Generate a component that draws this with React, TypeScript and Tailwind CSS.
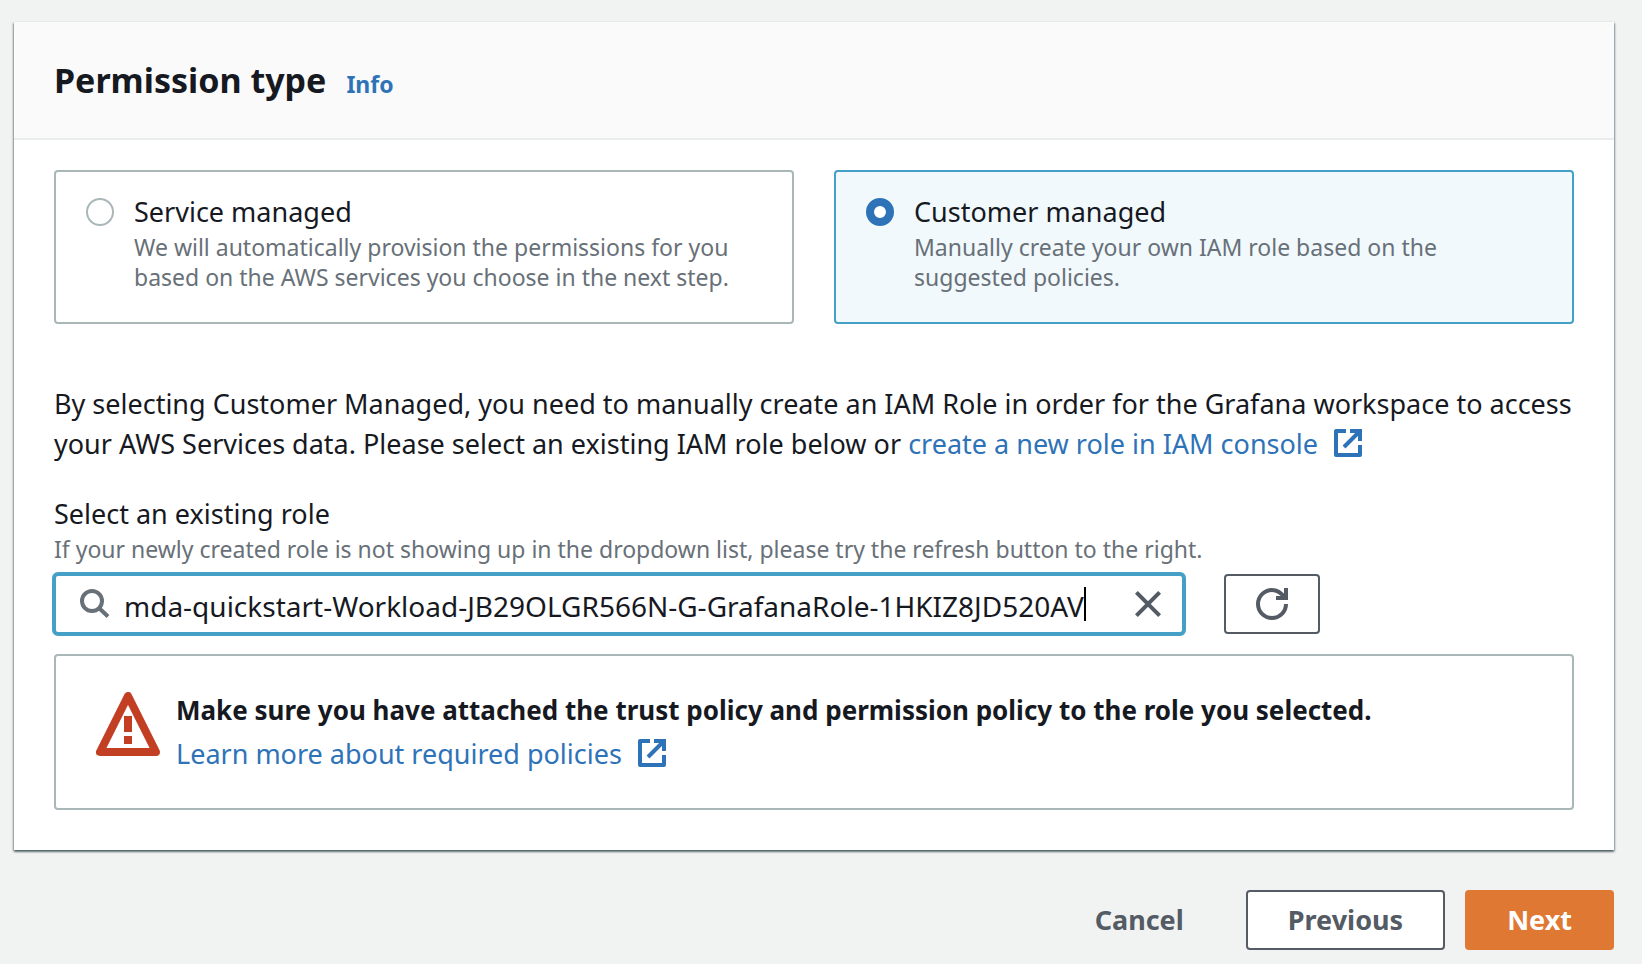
import { useState } from "react";

function ExternalIcon() {
  return (
    <svg className="ml-4 inline-block size-7 align-[-3px]" viewBox="0 0 28 28" fill="none" stroke="currentColor" strokeWidth="4" aria-hidden="true">
      <path d="M12 2H2V26H26V16" strokeLinejoin="round" />
      <path d="M16 2H26V12M26 2L10 18" />
    </svg>
  );
}

function SearchIcon() {
  return (
    <svg className="size-[30px] shrink-0 text-[#687078]" viewBox="0 0 30 30" fill="none" stroke="currentColor" strokeWidth="4" aria-hidden="true">
      <circle cx="12" cy="12" r="10" />
      <path d="M19 19L28 27.5" />
    </svg>
  );
}

function CloseIcon() {
  return (
    <svg className="size-[26px]" viewBox="0 0 26 26" fill="none" stroke="currentColor" strokeWidth="4" aria-hidden="true">
      <path d="M1.4 1.4L24.6 24.6M24.6 1.4L1.4 24.6" />
    </svg>
  );
}

function RefreshIcon() {
  return (
    <svg className="size-8" viewBox="0 0 32 32" fill="none" stroke="currentColor" strokeWidth="4" aria-hidden="true">
      <path d="M30 16A14 14 0 1 1 16 2C21.500 2 25 4.500 28.500 9.500" />
      <path d="M30 0V10H20" />
    </svg>
  );
}

function WarningIcon() {
  return (
    <svg className="mt-1 size-16 shrink-0 text-[#c33f24]" viewBox="0 0 64 64" aria-hidden="true">
      <path d="M32 4L4 60H60Z" fill="none" stroke="currentColor" strokeWidth="8" strokeLinejoin="round" />
      <path d="M28 24h8v16h-8zM28 44h8v8h-8z" fill="currentColor" />
    </svg>
  );
}

const options = [
  {
    id: "service",
    title: "Service managed",
    text: "We will automatically provision the permissions for you based on the AWS services you choose in the next step.",
  },
  {
    id: "customer",
    title: "Customer managed",
    text: "Manually create your own IAM role based on the suggested policies.",
  },
];

export default function App() {
  const [type, setType] = useState("customer");
  const [role, setRole] = useState("mda-quickstart-Workload-JB29OLGR566N-G-GrafanaRole-1HKIZ8JD520AV");

  return (
    <div className="min-h-screen bg-[#f1f3f3] pt-[22px] pr-7 pb-3.5 pl-3.5 font-['Noto_Sans','Open_Sans',sans-serif] text-[27px] leading-10 text-[#16191f]">
      <section className="bg-white shadow-[0_2px_2px_0_rgba(0,28,36,0.45),1px_1px_2px_0_rgba(0,28,36,0.3),-1px_1px_2px_0_rgba(0,28,36,0.3)]">
        <header className="flex items-baseline gap-5 border-b-2 border-[#eaeded] bg-[#fafafa] px-10 py-[38px]">
          <h2 className="text-[34px] leading-10 font-bold">Permission type</h2>
          <a href="#info" className="text-[23px] leading-8 font-bold text-[#2e73b8]">Info</a>
        </header>

        <div className="px-10 pt-[30px] pb-10">
          <div className="grid grid-cols-2 gap-10" role="radiogroup" aria-label="Permission type">
            {options.map((o) => (
              <label
                key={o.id}
                className="flex gap-5 rounded-sm border-2 border-[#aab7b8] bg-white px-[30px] pt-5 pb-[30px] has-checked:border-[#44a0c6] has-checked:bg-[#f1f9fd]"
              >
                <input
                  type="radio"
                  name="permission-type"
                  checked={type === o.id}
                  onChange={() => setType(o.id)}
                  className="mt-1.5 size-7 shrink-0 appearance-none rounded-full border-2 border-[#aab7b8] bg-white checked:border-8 checked:border-[#2e73b8]"
                />
                <span className="flex flex-col">
                  <span>{o.title}</span>
                  <span className="text-[23px] leading-[30px] text-[#687078]">{o.text}</span>
                </span>
              </label>
            ))}
          </div>

          <p className="mt-[60px]">
            By selecting Customer Managed, you need to manually create an IAM Role in order for the Grafana workspace to access your AWS Services data. Please select an existing IAM role below or{" "}
            <a href="#iam" className="text-[#2e73b8]">
              create a new role in IAM console
              <ExternalIcon />
            </a>
          </p>

          <label htmlFor="role" className="mt-[30px] block">Select an existing role</label>
          <p id="role-hint" className="text-[23px] leading-[30px] text-[#687078]">
            If your newly created role is not showing up in the dropdown list, please try the refresh button to the right.
          </p>

          <div className="mt-2 -ml-0.5 flex items-center gap-[38px]">
            <div className="flex h-16 w-3/4 max-w-[1134px] items-center rounded-md border-4 border-[#44a0c6] bg-white pr-[21px] pl-6">
              <SearchIcon />
              <input
                id="role"
                type="text"
                aria-describedby="role-hint"
                value={role}
                onChange={(e) => setRole(e.target.value)}
                className="ml-3.5 field-sizing-content min-w-0 pt-1 text-[28px] leading-10 outline-none"
              />
              <span className="h-[34px] w-0.5 shrink-0 bg-black" />
              <button type="button" aria-label="Clear" className="ml-auto text-[#545b64]" onClick={() => setRole("")}>
                <CloseIcon />
              </button>
            </div>
            <button type="button" aria-label="Refresh" className="flex h-[60px] w-24 items-center justify-center rounded-sm border-2 border-[#545b64] bg-white text-[#545b64]">
              <RefreshIcon />
            </button>
          </div>

          <div className="mt-[18px] flex gap-4 rounded-sm border-2 border-[#aab7b8] px-10 py-8 leading-[44px]">
            <WarningIcon />
            <div>
              <p className="text-[26px] leading-[44px] font-bold">Make sure you have attached the trust policy and permission policy to the role you selected.</p>
              <a href="#policies" className="text-[#2e73b8]">
                Learn more about required policies
                <ExternalIcon />
              </a>
            </div>
          </div>
        </div>
      </section>

      <footer className="mt-10 flex justify-end gap-5 font-bold text-[#545b64]">
        <button type="button" className="h-[60px] px-[42px]">Cancel</button>
        <button type="button" className="h-[60px] rounded-sm border-2 border-[#545b64] bg-white px-10">Previous</button>
        <button type="button" className="h-[60px] rounded-sm bg-[#df7832] px-[42px] text-white">Next</button>
      </footer>
    </div>
  );
}
